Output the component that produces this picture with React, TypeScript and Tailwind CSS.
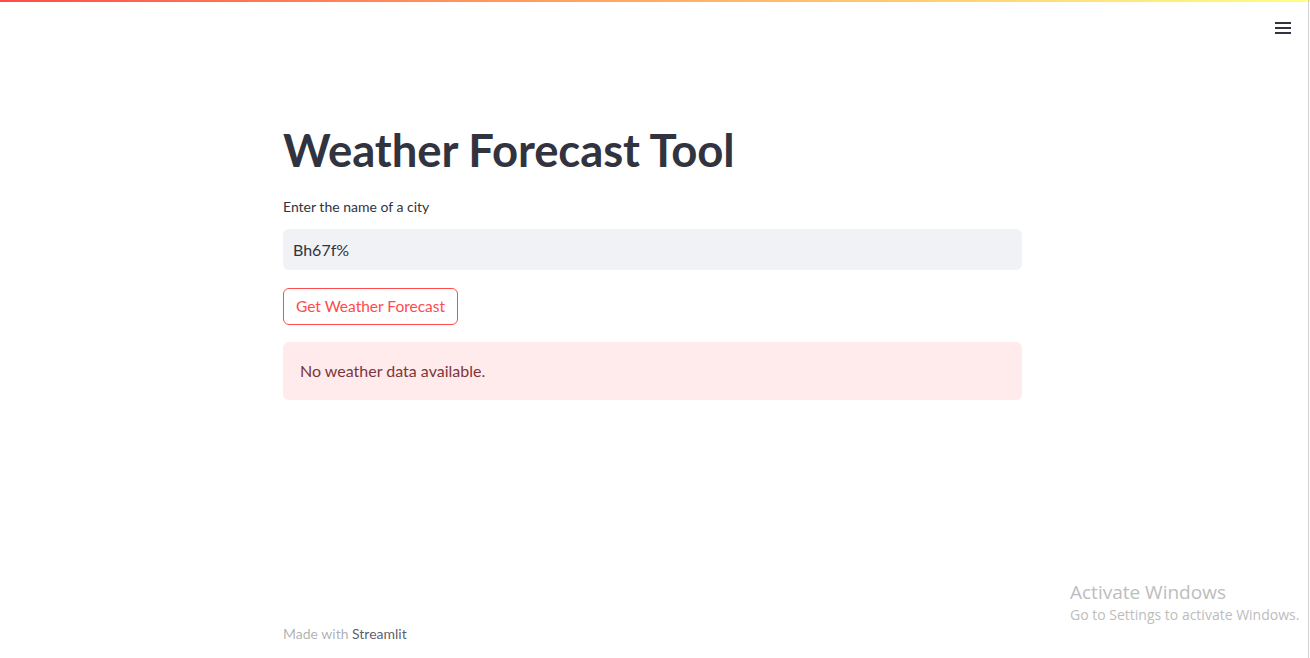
const FONT = "font-['Lato','Noto_Sans',sans-serif]"

function Hamburger() {
  return (
    <svg width="18" height="14" viewBox="0 0 18 14" className="text-[#31333f]">
      <rect x="1" y="1" width="16" height="2" fill="currentColor" />
      <rect x="1" y="6" width="16" height="2" fill="currentColor" />
      <rect x="1" y="11" width="16" height="2" fill="currentColor" />
    </svg>
  )
}

export default function App() {
  return (
    <div className={`relative h-[658px] w-[1310px] overflow-hidden bg-white ${FONT} text-[#31333f]`}>
      {/* top decoration */}
      <div className="h-[2px] w-full bg-gradient-to-r from-[#ff4b4b] to-[#ffff80]" />
      <div className="absolute right-[1px] top-0 h-full w-[1px] bg-[#d0d0d0]" />

      {/* header menu */}
      <div className="flex justify-end pr-[18px] pt-[19px]">
        <Hamburger />
      </div>

      {/* main block */}
      <div className="ml-[283px] flex w-[739px] flex-col pt-[89px]">
        <h1 className="text-[45.5px] font-bold leading-[52px] tracking-[-0.1px]">Weather Forecast Tool</h1>

        <label className="mt-[21px] text-[14px] leading-[20px]">Enter the name of a city</label>
        <div className="mt-[12px] flex h-[41px] items-center rounded-[6px] bg-[#f0f2f6] px-[10px] text-[16px]">
          Bh67f%
        </div>

        <div className="mt-[18px]">
          <button className="h-[37px] rounded-[6px] border border-[#ff4b4b] px-[12px] text-[15.5px] text-[#ff4b4b]">
            Get Weather Forecast
          </button>
        </div>

        <div className="mt-[17px] flex h-[58px] items-center rounded-[6px] bg-[#ffebeb] px-[17px] text-[16px] text-[#7d353b]">
          No weather data available.
        </div>
      </div>

      {/* footer */}
      <div className="absolute left-[283px] top-[623px] text-[14px] text-[#31333f]/40">
        Made with <span className="text-[#31333f]/80">Streamlit</span>
      </div>

      {/* OS watermark */}
      <div className="absolute left-[1070px] top-[579px] whitespace-nowrap font-['Open_Sans',sans-serif] text-[#bdbdbd]">
        <div className="text-[19px] leading-[26px]">Activate Windows</div>
        <div className="text-[14px] leading-[20px]">Go to Settings to activate Windows.</div>
      </div>
    </div>
  )
}
